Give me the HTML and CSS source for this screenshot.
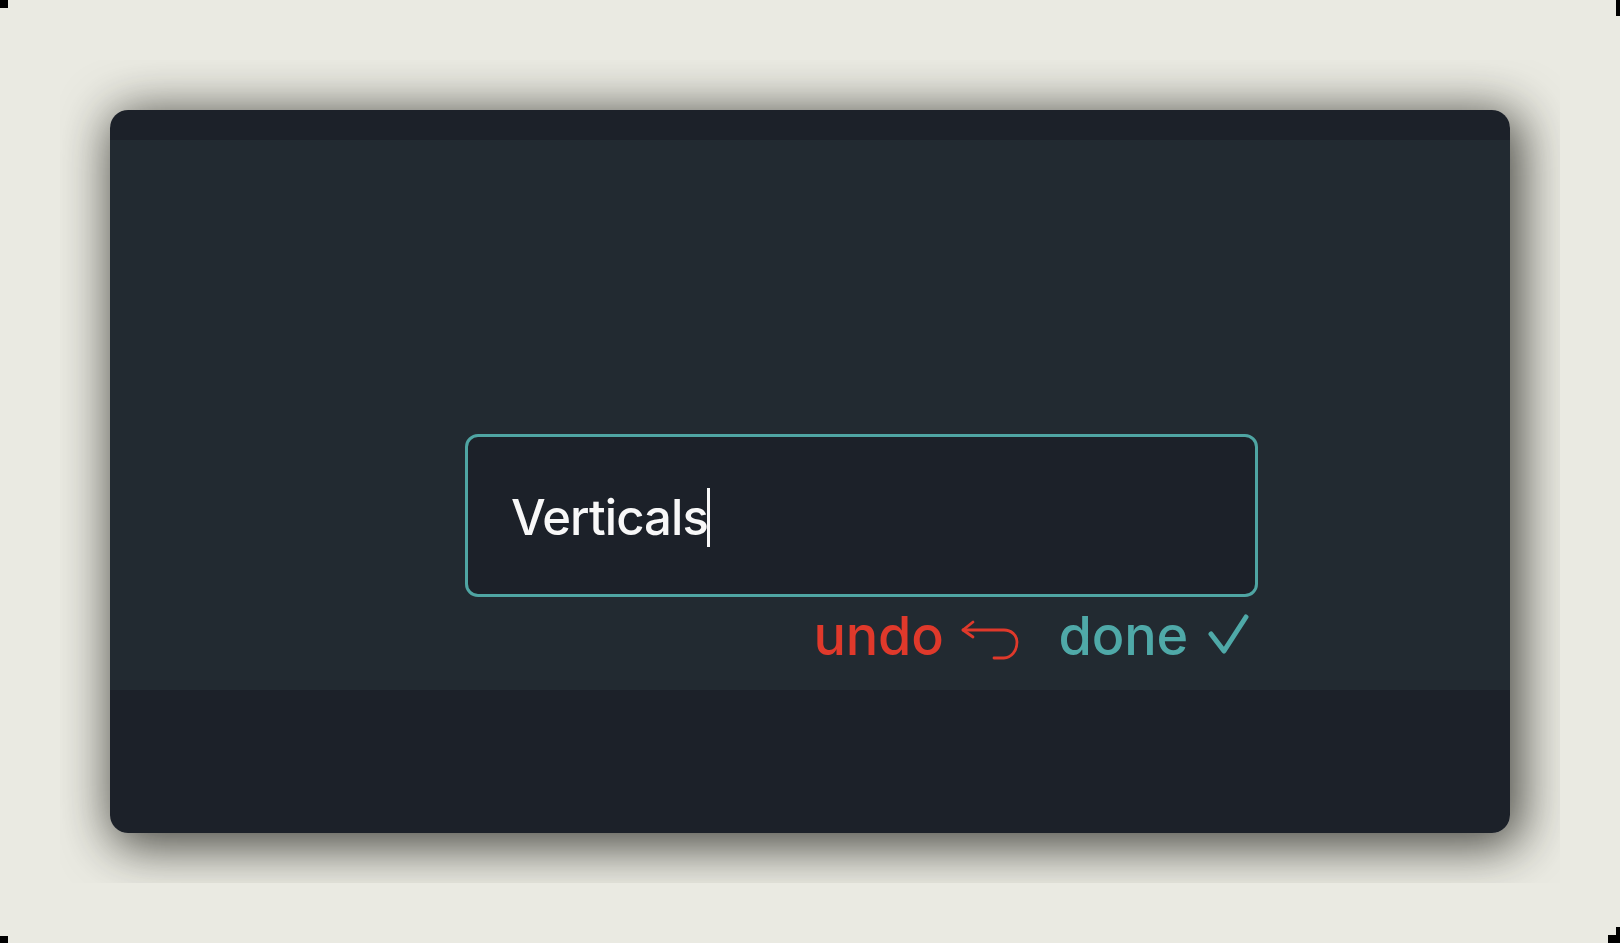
FILE: index.html
```html
<!DOCTYPE html>
<html lang="en">
<head>
  <meta charset="UTF-8">
  <title>Verticals</title>
  <link rel="stylesheet" href="styles.css">
</head>
<body>
  <div class="notch notch-tl"></div>
  <div class="notch notch-tr"></div>
  <div class="notch notch-bl"></div>
  <div class="notch notch-br"></div>
  <div class="notch notch-br2"></div>

  <div class="stage">
    <div class="card">
      <div class="card-top"></div>
      <div class="card-main">
        <div class="editor">
          <div class="field">
            <span class="field-text">Verticals</span><span class="caret"></span>
          </div>
          <div class="actions">
            <span class="action undo">undo
              <svg class="undo-icon" width="58" height="40" viewBox="0 0 58 40" fill="none" stroke="currentColor" stroke-width="2.8" stroke-linecap="round" stroke-linejoin="round">
                <path d="M12 2 L2 10 L12 17"/>
                <path d="M2 10 H43 C50 10 56 15 56 22 C56 31 50 38 43 38 H33"/>
              </svg>
            </span>
            <span class="action done">done
              <svg class="done-icon" width="44" height="42" viewBox="0 0 44 42" fill="none" stroke="currentColor" stroke-width="5" stroke-linecap="round" stroke-linejoin="round">
                <path d="M6 21 L19 38 L41 4"/>
              </svg>
            </span>
          </div>
        </div>
      </div>
      <div class="card-bottom"></div>
    </div>
  </div>
</body>
</html>
```

FILE: styles.css
```css
* {
  box-sizing: border-box;
}

html, body {
  margin: 0;
  height: 943px;
  overflow: hidden;
}

body {
  position: relative;
  background-color: #eaeae2;
  font-family: 'Inter', 'Liberation Sans', sans-serif;
  padding: 60px;
}

.notch {
  position: absolute;
  background-color: #000;
}

.notch-tl { left: 0; top: 0; width: 8px; height: 8px; }
.notch-tr { right: 0; top: 0; width: 4px; height: 16px; }
.notch-bl { left: 0; bottom: 0; width: 8px; height: 7px; }
.notch-br { right: 0; bottom: 0; width: 12px; height: 8px; }
.notch-br2 { right: 0; bottom: 8px; width: 4px; height: 8px; }

.stage {
  height: 823px;
  padding: 50px;
  overflow: hidden;
}

.card {
  height: 723px;
  display: flex;
  flex-direction: column;
  border-radius: 18px;
  overflow: hidden;
  box-shadow: 6px 8px 50px 6px rgba(20, 20, 15, 0.75);
}

.card-top {
  height: 30px;
  background-color: #1c2129;
}

.card-main {
  height: 550px;
  background-color: #222a31;
  padding: 294px 0 0 355px;
}

.card-bottom {
  flex: 1;
  background-color: #1c2129;
}

.editor {
  width: 793px;
}

.field {
  height: 163px;
  display: flex;
  align-items: center;
  padding: 4px 0 0 43px;
  background-color: #1c2129;
  border: 3.5px solid #4fa5a3;
  border-radius: 13px;
}

.field-text {
  font-size: 49px;
  font-weight: 500;
  letter-spacing: -0.9px;
  color: #f8f8f8;
}

.caret {
  width: 3px;
  height: 59px;
  margin-left: -1px;
  background-color: #f8f8f8;
}

.actions {
  display: flex;
  justify-content: flex-end;
  gap: 40px;
  padding: 8px 9px 0 0;
}

.action {
  display: flex;
  align-items: center;
  gap: 17px;
  font-size: 54px;
  font-weight: 450;
  letter-spacing: -0.2px;
  line-height: 62px;
}

.undo {
  color: #e0392b;
}

.done {
  color: #4fa9a8;
}

.undo-icon {
  margin-top: 8px;
}

.done-icon {
  margin-top: -4px;
}
```
